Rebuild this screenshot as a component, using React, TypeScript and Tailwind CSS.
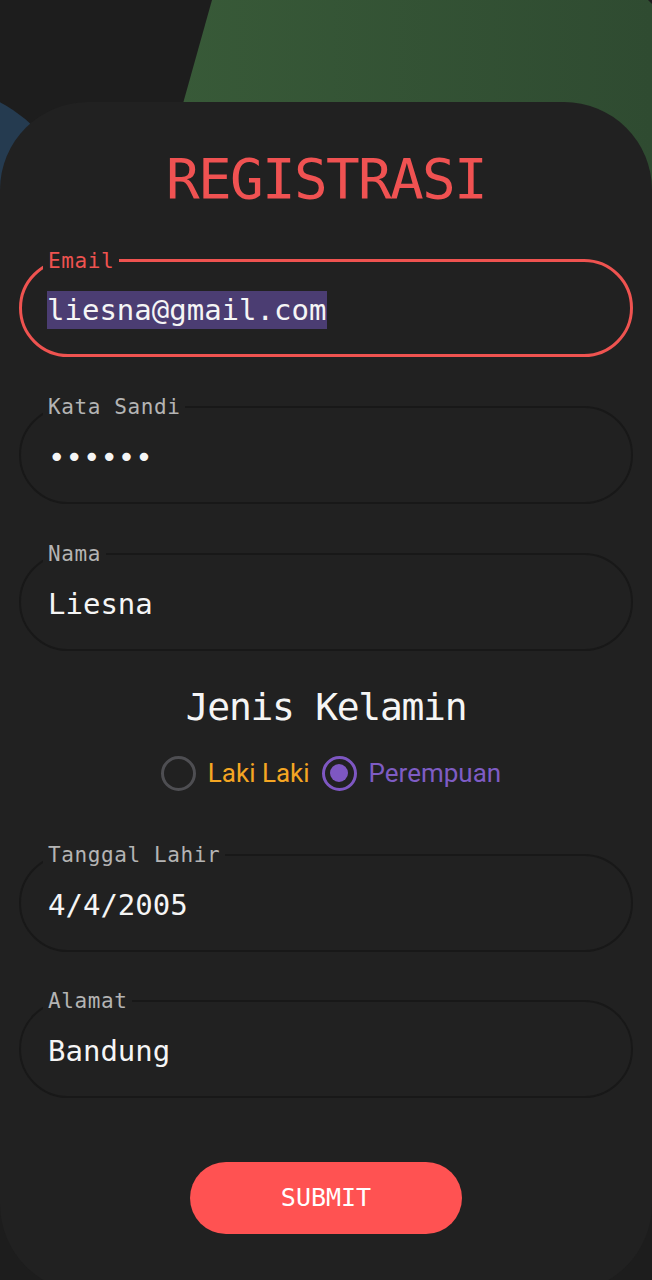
import { useState } from 'react';

const mono = "font-['DejaVu_Sans_Mono',monospace]";

function Field({
  label,
  value,
  focused = false,
  selected = false,
}: {
  label: string;
  value: string;
  focused?: boolean;
  selected?: boolean;
}) {
  return (
    <div
      className={`relative h-[98px] rounded-full flex items-center pt-[3px] ${
        focused ? 'border-[3px] border-[#ef5350] pl-[25px]' : 'border-2 border-[#181818] pl-[27px]'
      }`}
    >
      <span
        className={`absolute -top-[11px] ${focused ? 'left-[21px] text-[#ef5350]' : 'left-[22px] text-[#b4b4b4]'} px-[5px] bg-[#212121] text-[21px] leading-[20px] tracking-[0.6px] ${mono}`}
      >
        {label}
      </span>
      <span
        className={`text-[29px] leading-[38px] text-[#f5f5f5] ${mono} ${
          selected ? 'bg-[#4b3d72] pr-[1px]' : ''
        }`}
      >
        {value}
      </span>
    </div>
  );
}

function Radio({
  label,
  checked,
  color,
  onSelect,
}: {
  label: string;
  checked: boolean;
  color: string;
  onSelect: () => void;
}) {
  return (
    <button onClick={onSelect} className="flex items-center gap-[12px]">
      <span
        className={`w-[35px] h-[35px] rounded-full border-[3px] flex items-center justify-center ${
          checked ? 'border-[#7e57c2]' : 'border-[#4e4e52]'
        }`}
      >
        {checked && <span className="w-[18px] h-[18px] rounded-full bg-[#7e57c2]" />}
      </span>
      <span className={`text-[26px] font-['Roboto',sans-serif] ${color}`}>{label}</span>
    </button>
  );
}

export default function App() {
  const [gender, setGender] = useState('P');

  return (
    <div className="relative w-[652px] h-[1280px] overflow-hidden bg-[#1d1d1d]">
      <svg className="absolute left-0 top-0" width="652" height="320" viewBox="0 0 652 320">
        <defs>
          <linearGradient id="g" x1="0" x2="1" y1="0" y2="0">
            <stop offset="0" stopColor="#385a38" />
            <stop offset="1" stopColor="#2f4b31" />
          </linearGradient>
        </defs>
        <polygon points="212,0 648,0 652,4 652,320 170,150" fill="url(#g)" />
        <circle cx="-70" cy="235" r="150" fill="#253b50" />
      </svg>

      <div className="relative mt-[102px] h-[1190px] rounded-[88px] bg-[#212121] px-[19px] pt-[45px]">
        <h1
          className={`text-center text-[56px] leading-[64px] tracking-[-1.7px] text-[#f05252] ${mono}`}
        >
          REGISTRASI
        </h1>

        <div className="mt-[48px] flex flex-col gap-[49px]">
          <Field label="Email" value="liesna@gmail.com" focused selected />
          <Field label="Kata Sandi" value="••••••" />
          <Field label="Nama" value="Liesna" />
        </div>

        <h2
          className={`mt-[34px] text-center text-[38px] leading-[44px] tracking-[-1.3px] text-[#f5f5f5] ${mono}`}
        >
          Jenis Kelamin
        </h2>

        <div className="mt-[24px] h-[40px] flex items-center justify-center gap-[12px] pl-[10px]">
          <Radio
            label="Laki Laki"
            checked={gender === 'L'}
            color="text-[#f5a623]"
            onSelect={() => setGender('L')}
          />
          <Radio
            label="Perempuan"
            checked={gender === 'P'}
            color="text-[#7e5cc4]"
            onSelect={() => setGender('P')}
          />
        </div>

        <div className="mt-[61px] flex flex-col gap-[48px]">
          <Field label="Tanggal Lahir" value="4/4/2005" />
          <Field label="Alamat" value="Bandung" />
        </div>

        <div className="mt-[64px] flex justify-center">
          <button
            className={`w-[272px] h-[72px] rounded-full bg-[#ff5252] text-white text-[25px] ${mono}`}
          >
            SUBMIT
          </button>
        </div>
      </div>
    </div>
  );
}
